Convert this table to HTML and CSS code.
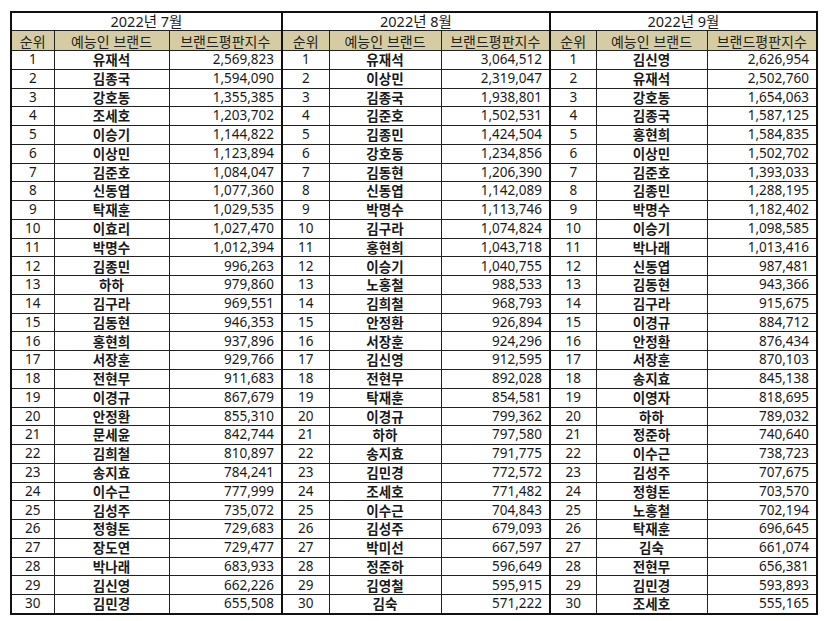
FILE: index.html
```html
<!DOCTYPE html>
<html lang="ko">
<head>
<meta charset="utf-8">
<title>예능인 브랜드평판지수</title>
<link rel="stylesheet" href="styles.css">
</head>
<body>
<div class="wrap">
<table class="rank">
<colgroup>
<col class="c-r1"><col class="c-n1"><col class="c-s1">
<col class="c-r2"><col class="c-n2"><col class="c-s2">
<col class="c-r3"><col class="c-n3"><col class="c-s3">
</colgroup>
<thead>
<tr class="title"><th colspan="3">2022년 7월</th><th colspan="3" class="g">2022년 8월</th><th colspan="3" class="g">2022년 9월</th></tr>
<tr class="head"><th>순위</th><th>예능인 브랜드</th><th>브랜드평판지수</th><th class="g">순위</th><th>예능인 브랜드</th><th>브랜드평판지수</th><th class="g">순위</th><th>예능인 브랜드</th><th>브랜드평판지수</th></tr>
</thead>
<tbody>
<tr><td>1</td><td class="n">유재석</td><td class="s">2,569,823</td><td class="g">1</td><td class="n">유재석</td><td class="s">3,064,512</td><td class="g">1</td><td class="n">김신영</td><td class="s">2,626,954</td></tr>
<tr><td>2</td><td class="n">김종국</td><td class="s">1,594,090</td><td class="g">2</td><td class="n">이상민</td><td class="s">2,319,047</td><td class="g">2</td><td class="n">유재석</td><td class="s">2,502,760</td></tr>
<tr><td>3</td><td class="n">강호동</td><td class="s">1,355,385</td><td class="g">3</td><td class="n">김종국</td><td class="s">1,938,801</td><td class="g">3</td><td class="n">강호동</td><td class="s">1,654,063</td></tr>
<tr><td>4</td><td class="n">조세호</td><td class="s">1,203,702</td><td class="g">4</td><td class="n">김준호</td><td class="s">1,502,531</td><td class="g">4</td><td class="n">김종국</td><td class="s">1,587,125</td></tr>
<tr><td>5</td><td class="n">이승기</td><td class="s">1,144,822</td><td class="g">5</td><td class="n">김종민</td><td class="s">1,424,504</td><td class="g">5</td><td class="n">홍현희</td><td class="s">1,584,835</td></tr>
<tr><td>6</td><td class="n">이상민</td><td class="s">1,123,894</td><td class="g">6</td><td class="n">강호동</td><td class="s">1,234,856</td><td class="g">6</td><td class="n">이상민</td><td class="s">1,502,702</td></tr>
<tr><td>7</td><td class="n">김준호</td><td class="s">1,084,047</td><td class="g">7</td><td class="n">김동현</td><td class="s">1,206,390</td><td class="g">7</td><td class="n">김준호</td><td class="s">1,393,033</td></tr>
<tr><td>8</td><td class="n">신동엽</td><td class="s">1,077,360</td><td class="g">8</td><td class="n">신동엽</td><td class="s">1,142,089</td><td class="g">8</td><td class="n">김종민</td><td class="s">1,288,195</td></tr>
<tr><td>9</td><td class="n">탁재훈</td><td class="s">1,029,535</td><td class="g">9</td><td class="n">박명수</td><td class="s">1,113,746</td><td class="g">9</td><td class="n">박명수</td><td class="s">1,182,402</td></tr>
<tr><td>10</td><td class="n">이효리</td><td class="s">1,027,470</td><td class="g">10</td><td class="n">김구라</td><td class="s">1,074,824</td><td class="g">10</td><td class="n">이승기</td><td class="s">1,098,585</td></tr>
<tr><td>11</td><td class="n">박명수</td><td class="s">1,012,394</td><td class="g">11</td><td class="n">홍현희</td><td class="s">1,043,718</td><td class="g">11</td><td class="n">박나래</td><td class="s">1,013,416</td></tr>
<tr><td>12</td><td class="n">김종민</td><td class="s">996,263</td><td class="g">12</td><td class="n">이승기</td><td class="s">1,040,755</td><td class="g">12</td><td class="n">신동엽</td><td class="s">987,481</td></tr>
<tr><td>13</td><td class="n">하하</td><td class="s">979,860</td><td class="g">13</td><td class="n">노홍철</td><td class="s">988,533</td><td class="g">13</td><td class="n">김동현</td><td class="s">943,366</td></tr>
<tr><td>14</td><td class="n">김구라</td><td class="s">969,551</td><td class="g">14</td><td class="n">김희철</td><td class="s">968,793</td><td class="g">14</td><td class="n">김구라</td><td class="s">915,675</td></tr>
<tr><td>15</td><td class="n">김동현</td><td class="s">946,353</td><td class="g">15</td><td class="n">안정환</td><td class="s">926,894</td><td class="g">15</td><td class="n">이경규</td><td class="s">884,712</td></tr>
<tr><td>16</td><td class="n">홍현희</td><td class="s">937,896</td><td class="g">16</td><td class="n">서장훈</td><td class="s">924,296</td><td class="g">16</td><td class="n">안정환</td><td class="s">876,434</td></tr>
<tr><td>17</td><td class="n">서장훈</td><td class="s">929,766</td><td class="g">17</td><td class="n">김신영</td><td class="s">912,595</td><td class="g">17</td><td class="n">서장훈</td><td class="s">870,103</td></tr>
<tr><td>18</td><td class="n">전현무</td><td class="s">911,683</td><td class="g">18</td><td class="n">전현무</td><td class="s">892,028</td><td class="g">18</td><td class="n">송지효</td><td class="s">845,138</td></tr>
<tr><td>19</td><td class="n">이경규</td><td class="s">867,679</td><td class="g">19</td><td class="n">탁재훈</td><td class="s">854,581</td><td class="g">19</td><td class="n">이영자</td><td class="s">818,695</td></tr>
<tr><td>20</td><td class="n">안정환</td><td class="s">855,310</td><td class="g">20</td><td class="n">이경규</td><td class="s">799,362</td><td class="g">20</td><td class="n">하하</td><td class="s">789,032</td></tr>
<tr><td>21</td><td class="n">문세윤</td><td class="s">842,744</td><td class="g">21</td><td class="n">하하</td><td class="s">797,580</td><td class="g">21</td><td class="n">정준하</td><td class="s">740,640</td></tr>
<tr><td>22</td><td class="n">김희철</td><td class="s">810,897</td><td class="g">22</td><td class="n">송지효</td><td class="s">791,775</td><td class="g">22</td><td class="n">이수근</td><td class="s">738,723</td></tr>
<tr><td>23</td><td class="n">송지효</td><td class="s">784,241</td><td class="g">23</td><td class="n">김민경</td><td class="s">772,572</td><td class="g">23</td><td class="n">김성주</td><td class="s">707,675</td></tr>
<tr><td>24</td><td class="n">이수근</td><td class="s">777,999</td><td class="g">24</td><td class="n">조세호</td><td class="s">771,482</td><td class="g">24</td><td class="n">정형돈</td><td class="s">703,570</td></tr>
<tr><td>25</td><td class="n">김성주</td><td class="s">735,072</td><td class="g">25</td><td class="n">이수근</td><td class="s">704,843</td><td class="g">25</td><td class="n">노홍철</td><td class="s">702,194</td></tr>
<tr><td>26</td><td class="n">정형돈</td><td class="s">729,683</td><td class="g">26</td><td class="n">김성주</td><td class="s">679,093</td><td class="g">26</td><td class="n">탁재훈</td><td class="s">696,645</td></tr>
<tr><td>27</td><td class="n">장도연</td><td class="s">729,477</td><td class="g">27</td><td class="n">박미선</td><td class="s">667,597</td><td class="g">27</td><td class="n">김숙</td><td class="s">661,074</td></tr>
<tr><td>28</td><td class="n">박나래</td><td class="s">683,933</td><td class="g">28</td><td class="n">정준하</td><td class="s">596,649</td><td class="g">28</td><td class="n">전현무</td><td class="s">656,381</td></tr>
<tr><td>29</td><td class="n">김신영</td><td class="s">662,226</td><td class="g">29</td><td class="n">김영철</td><td class="s">595,915</td><td class="g">29</td><td class="n">김민경</td><td class="s">593,893</td></tr>
<tr><td>30</td><td class="n">김민경</td><td class="s">655,508</td><td class="g">30</td><td class="n">김숙</td><td class="s">571,222</td><td class="g">30</td><td class="n">조세호</td><td class="s">555,165</td></tr>
</tbody>
</table>
</div>
</body>
</html>
```
FILE: styles.css
```css
html, body {
  margin: 0;
  padding: 0;
  background: #ffffff;
}
.wrap {
  padding: 11px 0 0 10px;
}
.rank {
  border-collapse: collapse;
  table-layout: fixed;
  width: 806px;
  border: 2px solid #111;
  font-family: "Noto Sans", "Noto Sans CJK KR", sans-serif;
  font-size: 13.5px;
  color: #1a1a1a;
}
.c-r1 { width: 43px; }
.c-n1 { width: 115px; }
.c-s1 { width: 113px; }
.c-r2 { width: 47px; }
.c-n2 { width: 112px; }
.c-s2 { width: 109px; }
.c-r3 { width: 46px; }
.c-n3 { width: 111px; }
.c-s3 { width: 110px; }
.rank th, .rank td {
  border: 1px solid #222;
  padding: 0;
  line-height: 1;
  text-align: center;
  white-space: nowrap;
  overflow: hidden;
}
.rank td {
  height: 17.77px;
}
.title th {
  height: 17px;
  font-weight: 400;
  background: #fff;
  font-size: 14.5px;
  font-family: "Noto Sans", "Noto Sans CJK KR", sans-serif;
}
.head th {
  height: 19px;
  font-weight: 400;
  background: #d6cca4;
  font-size: 14px;
  color: #222;
  font-family: "Noto Sans CJK KR", sans-serif;
}
.rank td.n {
  font-weight: 700;
  font-size: 13.5px;
  font-family: "Noto Sans CJK KR", sans-serif;
}
.rank td.s {
  text-align: right;
  padding-right: 7px;
}
.rank .g {
  border-left: 2px solid #111;
}
```
